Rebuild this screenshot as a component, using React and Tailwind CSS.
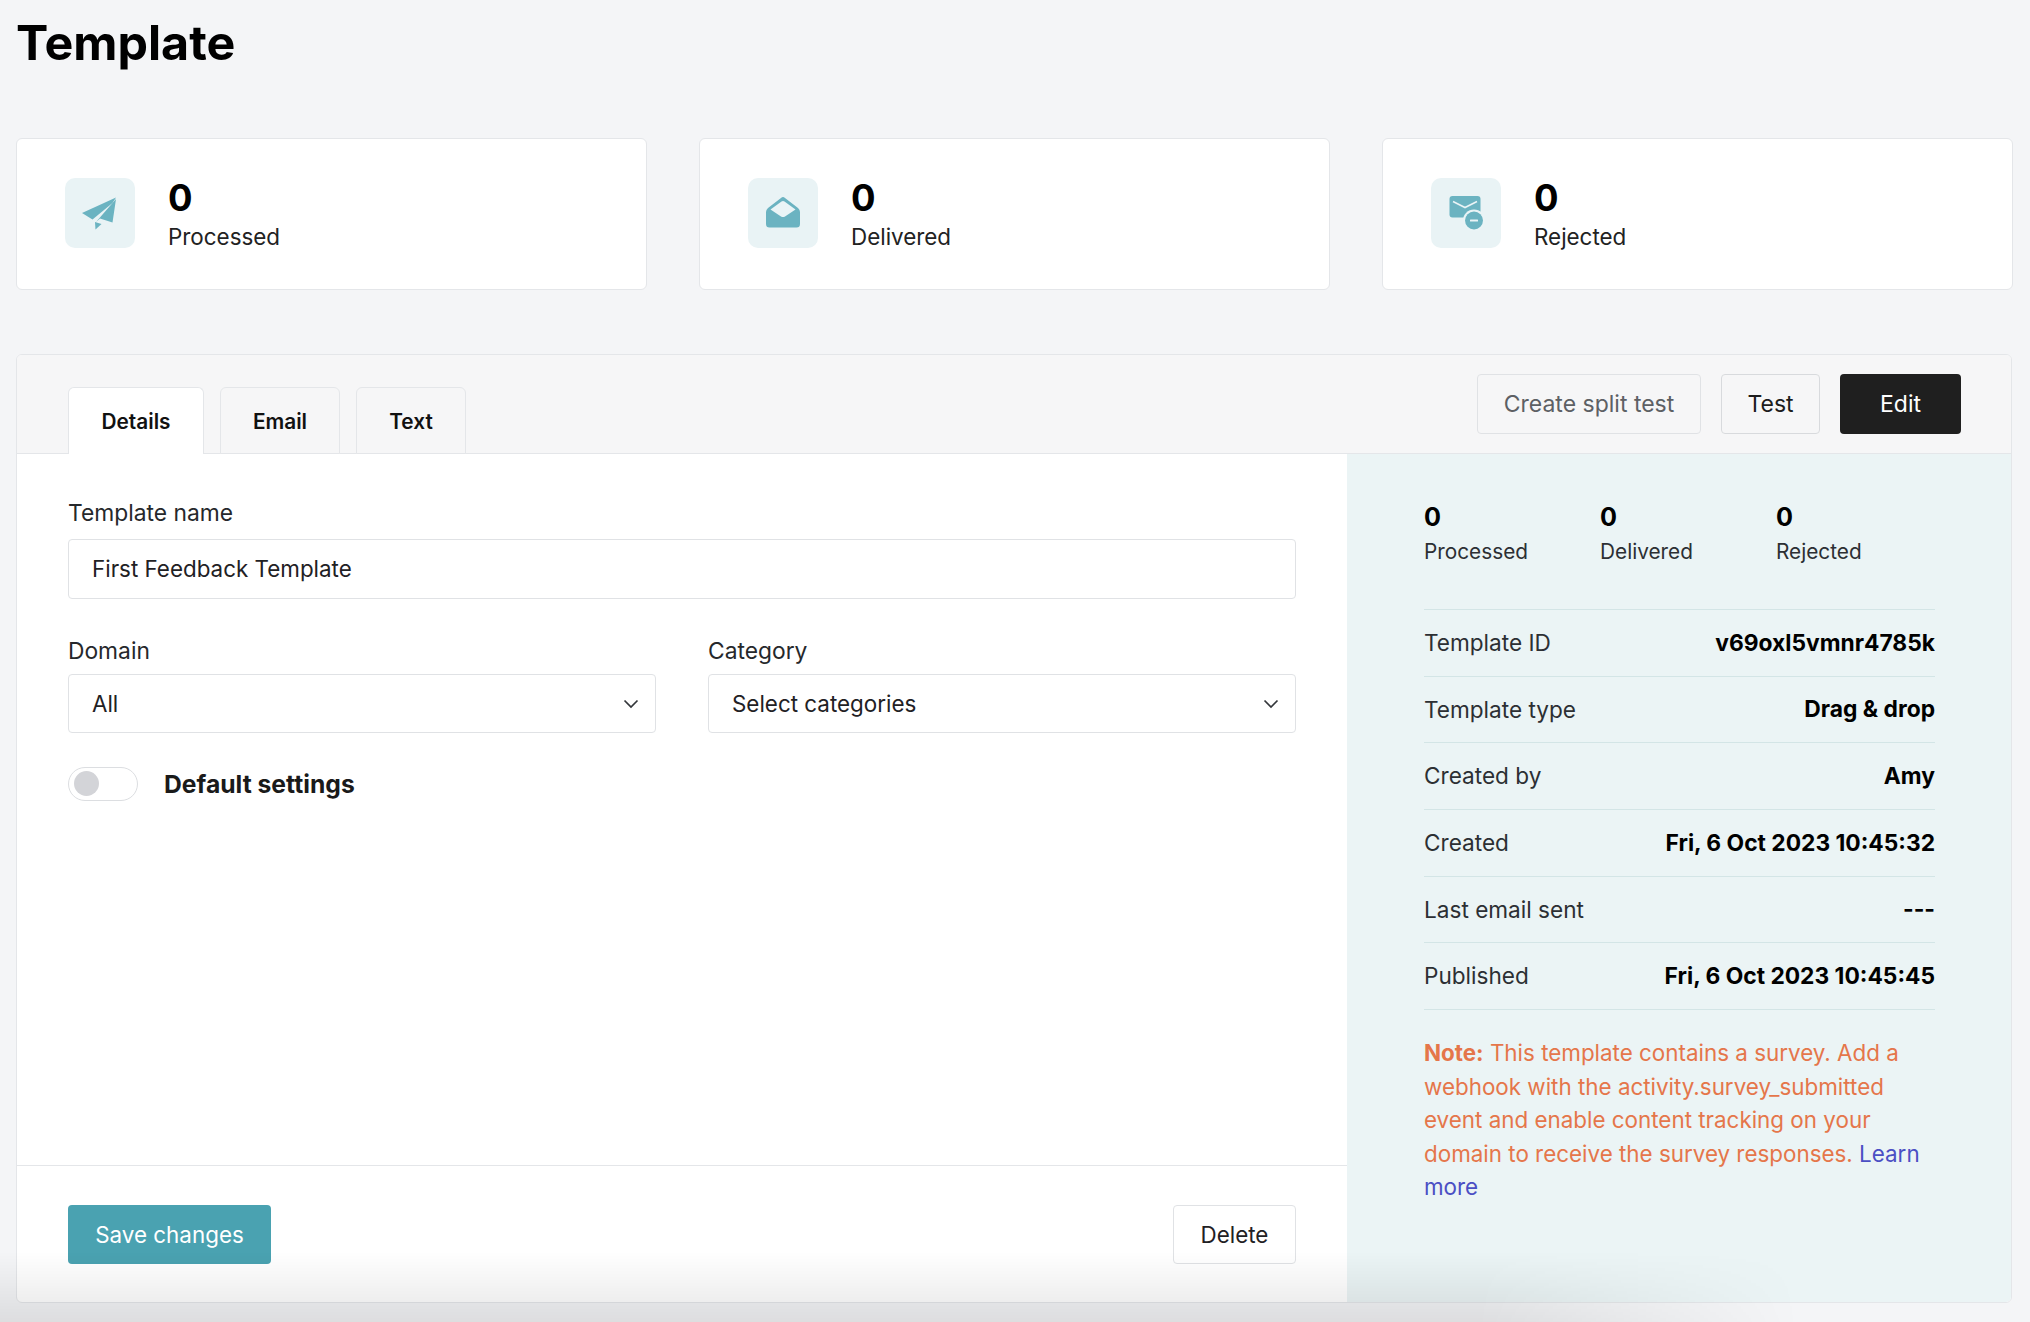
import React from "react";

function PlaneIcon() {
  return (
    <svg viewBox="0 0 70 70" className="w-[70px] h-[70px]">
      <path d="M51 19.5 L17 35 L27.5 41.5 L47.5 25 Z" fill="#6bb3c1" />
      <path d="M51 21 L47.5 44.5 L35 40.5 L31 44 Z" fill="#6bb3c1" />
      <path d="M30 44 L30.5 51.5 L36.5 46 Z" fill="#6bb3c1" />
    </svg>
  );
}

function OpenMailIcon() {
  return (
    <svg viewBox="0 0 70 70" className="w-[70px] h-[70px]">
      <path d="M35 19 Q36 19 37 20 L50 30 Q52 32 52 34 V46 Q52 49.5 48.5 49.5 H21.5 Q18 49.5 18 46 V34 Q18 32 20 30 L33 20 Q34 19 35 19 Z" fill="#6bb3c1" />
      <path d="M22.5 31.5 L33.5 23.5 Q35 22.5 36.5 23.5 L47.5 31.5 L37 38.5 Q35 39.7 33 38.5 Z" fill="#eaf4f6" />
    </svg>
  );
}

function RejectIcon() {
  return (
    <svg viewBox="0 0 70 70" className="w-[70px] h-[70px]">
      <rect x="18.5" y="18" width="31" height="21.5" rx="3" fill="#6bb3c1" />
      <path d="M22 23.5 L34 29.5 L46 23.5" fill="none" stroke="#eaf4f6" strokeWidth="1.6" />
      <circle cx="43" cy="42.5" r="11" fill="#eaf4f6" />
      <circle cx="43" cy="42.5" r="9" fill="#6bb3c1" />
      <rect x="39" y="41.5" width="8" height="2" rx="0.5" fill="#eaf4f6" />
    </svg>
  );
}

function Chevron() {
  return (
    <svg viewBox="0 0 28 28" className="w-[28px] h-[28px]" fill="none" stroke="#33363a" strokeWidth="1.7">
      <path d="M7.5 10.5 L14 17 L20.5 10.5" />
    </svg>
  );
}

function StatCard({ icon, label }) {
  return (
    <div className="flex-1 h-[152px] bg-white border border-[#e4e6e9] rounded-[6px] flex items-center pl-[48px] gap-[33px]">
      <div className="w-[70px] h-[70px] -mt-[2px] rounded-[10px] bg-[#e9f3f5]">{icon}</div>
      <div className="flex flex-col mt-[2px]">
        <div className="text-[36.4px] leading-[44px] font-bold text-black">0</div>
        <div className="text-[22.4px] leading-[34px] text-[#222]">{label}</div>
      </div>
    </div>
  );
}

function Tab({ children, active, w }) {
  return (
    <div
      className={
        active
          ? "h-[67px] -mb-px pt-[2px] bg-white border border-b-0 border-[#e4e6e9] rounded-t-[6px] flex items-center justify-center text-[20.8px] font-semibold text-[#111] w-[136px]"
          : "h-[67px] -mb-px pt-[2px] bg-[#f6f6f7] border border-[#e4e6e9] rounded-t-[6px] flex items-center justify-center text-[20.8px] font-semibold text-[#111] " + w
      }
    >
      {children}
    </div>
  );
}

function Row({ label, value }) {
  return (
    <div className="h-[66.67px] border-t border-[#d3e5e6] flex items-center justify-between">
      <span className="text-[22.6px] text-[#2c2f33]">{label}</span>
      <span className="text-[22.8px] font-bold text-black">{value}</span>
    </div>
  );
}

function MiniStat({ label }) {
  return (
    <div className="w-[176px] shrink-0">
      <div className="text-[25.2px] leading-[34px] font-bold text-black">0</div>
      <div className="text-[20.8px] leading-[36px] text-[#2c2f33] whitespace-nowrap">{label}</div>
    </div>
  );
}

export default function App() {
  return (
    <div className="relative w-[2030px] h-[1322px] overflow-hidden bg-[#f4f5f7] font-['Inter',sans-serif]">
      <h1 className="h-[138px] pl-[16px] pt-[14px] text-[48.4px] leading-[58px] font-bold text-black">Template</h1>

      <div className="flex gap-[52px] pl-[16px] pr-[17px]">
        <StatCard icon={<PlaneIcon />} label="Processed" />
        <StatCard icon={<OpenMailIcon />} label="Delivered" />
        <StatCard icon={<RejectIcon />} label="Rejected" />
      </div>

      <div className="mt-[64px] ml-[16px] mr-[18px] h-[949px] border border-[#e4e6e9] rounded-[6px] flex flex-col overflow-hidden bg-white">
        <div className="h-[99px] shrink-0 bg-[#f6f6f7] border-b border-[#e4e6e9] flex items-end justify-between pl-[51px] pr-[50px]">
          <div className="flex gap-[16px]">
            <Tab active>Details</Tab>
            <Tab w="w-[120px]">Email</Tab>
            <Tab w="w-[110px]">Text</Tab>
          </div>
          <div className="flex gap-[20px] self-start mt-[19px]">
            <div className="h-[60px] w-[224px] rounded-[4px] border border-[#e0e2e5] flex items-center justify-center text-[23px] text-[#5d6064]">Create split test</div>
            <div className="h-[60px] w-[99px] rounded-[4px] border border-[#d8dadd] flex items-center justify-center text-[23px] text-[#1c1c1c]">Test</div>
            <div className="h-[60px] w-[121px] rounded-[4px] bg-[#1f1f1f] flex items-center justify-center text-[23px] text-white">Edit</div>
          </div>
        </div>

        <div className="flex flex-1 min-h-0">
          <div className="w-[1330px] shrink-0 flex flex-col">
            <div className="flex-1 pl-[51px] pr-[51px] pt-[42px]">
              <div className="text-[22.8px] leading-[34px] text-[#26282b]">Template name</div>
              <div className="mt-[9px] h-[60px] border border-[#e0e2e5] rounded-[4px] flex items-center pl-[23px] text-[22.4px] text-[#1f2124]">First Feedback Template</div>
              <div className="mt-[35px] flex gap-[52px]">
                <div className="flex-1">
                  <div className="text-[22.8px] leading-[34px] text-[#26282b]">Domain</div>
                  <div className="mt-[6px] h-[59px] border border-[#e0e2e5] rounded-[4px] flex items-center justify-between pl-[23px] pr-[10px] text-[22.4px] text-[#1f2124]">
                    All
                    <Chevron />
                  </div>
                </div>
                <div className="flex-1">
                  <div className="text-[22.8px] leading-[34px] text-[#26282b]">Category</div>
                  <div className="mt-[6px] h-[59px] border border-[#e0e2e5] rounded-[4px] flex items-center justify-between pl-[23px] pr-[10px] text-[22.4px] text-[#1f2124]">
                    Select categories
                    <Chevron />
                  </div>
                </div>
              </div>
              <div className="mt-[31px] flex items-center gap-[26px]">
                <div className="w-[70px] h-[34px] rounded-full border border-[#dcdee1] bg-white flex items-center pl-[5px]">
                  <div className="w-[25px] h-[25px] rounded-full bg-[#d3d4d8]" />
                </div>
                <div className="mt-[2px] text-[24.7px] font-bold text-[#1a1a1a]">Default settings</div>
              </div>
            </div>
            <div className="h-[137px] shrink-0 border-t border-[#e4e6e9] flex items-start justify-between pl-[51px] pr-[51px] pt-[39px]">
              <div className="h-[59px] w-[203px] rounded-[4px] bg-[#4aa2b1] flex items-center justify-center text-[22.4px] text-white">Save changes</div>
              <div className="h-[59px] w-[123px] rounded-[4px] border border-[#e0e2e5] flex items-center justify-center text-[22.4px] text-[#1f2124]">Delete</div>
            </div>
          </div>

          <div className="flex-1 min-w-0 bg-[#ebf4f5] pl-[77px] pr-[76px] pt-[46px]">
            <div className="flex h-[109px]">
              <MiniStat label="Processed" />
              <MiniStat label="Delivered" />
              <MiniStat label="Rejected" />
            </div>
            <div className="border-b border-[#d3e5e6]">
              <Row label="Template ID" value="v69oxl5vmnr4785k" />
              <Row label="Template type" value="Drag & drop" />
              <Row label="Created by" value="Amy" />
              <Row label="Created" value="Fri, 6 Oct 2023 10:45:32" />
              <Row label="Last email sent" value="---" />
              <Row label="Published" value="Fri, 6 Oct 2023 10:45:45" />
            </div>
            <p className="mt-[26px] text-[22.4px] leading-[33.6px] text-[#e5764a]">
              <strong className="font-bold">Note:</strong> This template contains a survey. Add a webhook with the activity.survey_submitted event and enable content tracking on your domain to receive the survey responses. <a className="text-[#4b4fc4]">Learn more</a>
            </p>
          </div>
        </div>
      </div>

      <div className="absolute left-0 bottom-0 w-[1800px] h-[70px] pointer-events-none bg-gradient-to-b from-transparent to-[#00000018] [mask-image:linear-gradient(to_right,black_82%,transparent)]" />
    </div>
  );
}
